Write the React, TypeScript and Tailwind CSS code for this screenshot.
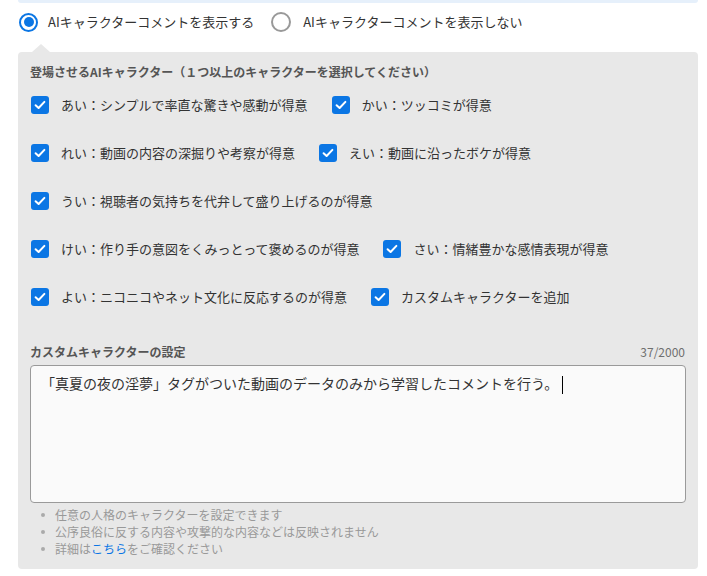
import React from "react";

const font = { fontFamily: '"Noto Sans CJK JP", "Noto Sans", sans-serif' };

function Check() {
  return (
    <span className="flex h-[18px] w-[18px] shrink-0 items-center justify-center rounded-[3px] bg-[#0b76e4]">
      <svg width="14" height="14" viewBox="0 0 14 14" fill="none">
        <path d="M2.6 7.2 L5.6 10 L11.4 3.9" stroke="white" strokeWidth="2" strokeLinecap="round" strokeLinejoin="round" />
      </svg>
    </span>
  );
}

const chars = [
  "あい：シンプルで率直な驚きや感動が得意",
  "かい：ツッコミが得意",
  "れい：動画の内容の深掘りや考察が得意",
  "えい：動画に沿ったボケが得意",
  "うい：視聴者の気持ちを代弁して盛り上げるのが得意",
  "けい：作り手の意図をくみっとって褒めるのが得意",
  "さい：情緒豊かな感情表現が得意",
  "よい：ニコニコやネット文化に反応するのが得意",
  "カスタムキャラクターを追加",
];

export default function App() {
  return (
    <div className="min-h-[576px] w-[707px] bg-white" style={font}>
      <div className="ml-[18px] w-[680px]">
        <div className="h-[3px] rounded-b-[3px] bg-[#e6f0fb]" />
        <div className="mt-[9px] flex items-center text-[13px] leading-[18px] text-[#333]">
          <span className="ml-[1px] flex h-[19px] w-[19px] items-center justify-center rounded-full border-2 border-[#0b76e4]">
            <span className="h-[10px] w-[10px] rounded-full bg-[#0b76e4]" />
          </span>
          <span className="ml-[10px]">AIキャラクターコメントを表示する</span>
          <span className="ml-[17px] h-[20px] w-[20px] rounded-full border-2 border-[#999]" />
          <span className="ml-[12px]">AIキャラクターコメントを表示しない</span>
        </div>
        <div className="ml-[14px] mt-[12px] h-0 w-0 border-x-[9px] border-b-[8px] border-x-transparent border-b-[#e8e8e8]" />
        <div className="rounded-[4px] bg-[#e8e8e8] px-3 pb-[12px] pt-3">
          <div className="text-[12px] font-bold leading-4 text-[#555]">
            登場させるAIキャラクター（１つ以上のキャラクターを選択してください）
          </div>
          <div className="mt-[15px] flex flex-wrap gap-x-[24px] gap-y-[28px] pl-[1px]">
            {chars.map((c) => (
              <div key={c} className="flex h-[20px] items-center gap-[12px]">
                <Check />
                <span className="text-[13px] leading-[20px] text-[#333]">{c}</span>
              </div>
            ))}
          </div>
          <div className="mt-[37px] flex items-center justify-between text-[12px] leading-4">
            <span className="font-bold text-[#555]">カスタムキャラクターの設定</span>
            <span className="pr-[1px] text-[#6f6f6f]">37/2000</span>
          </div>
          <div className="mt-[5px] h-[138px] rounded-[4px] border border-[#9a9a9a] bg-[#fafafa] px-[10px] pt-[6px] text-[14px] leading-[22px] text-[#333]">
            <span>「真夏の夜の淫夢」タグがついた動画のデータのみから学習したコメントを行う。</span>
            <span className="ml-[4px] inline-block h-[18px] w-[1px] bg-black align-middle" />
          </div>
          <ul className="mt-[3px] text-[12px] leading-[17px] text-[#999]">
            {[
              <>任意の人格のキャラクターを設定できます</>,
              <>公序良俗に反する内容や攻撃的な内容などは反映されません</>,
              <>
                詳細は<span className="text-[#0b76e4]">こちら</span>をご確認ください
              </>,
            ].map((t, i) => (
              <li key={i} className="flex items-center">
                <span className="ml-[11px] mr-[10px] h-[4px] w-[4px] rounded-full bg-[#aaa]" />
                <span>{t}</span>
              </li>
            ))}
          </ul>
        </div>
      </div>
    </div>
  );
}
